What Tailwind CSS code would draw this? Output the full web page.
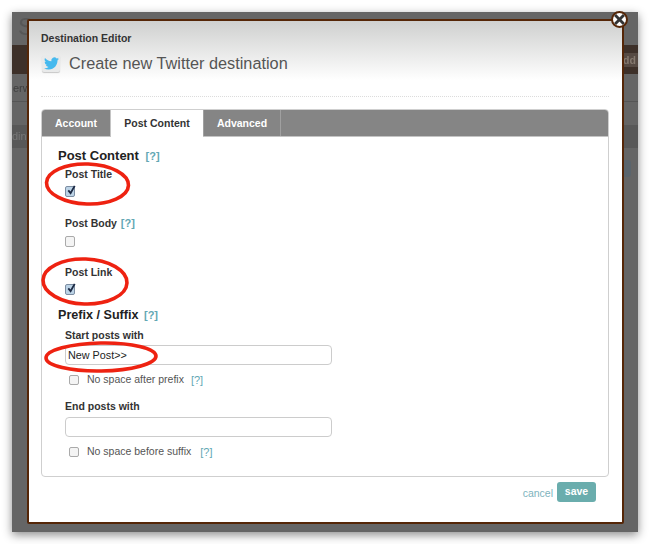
<!DOCTYPE html>
<html>
<head>
<meta charset="utf-8">
<script src="https://cdn.jsdelivr.net/npm/@tailwindcss/browser@4"></script>
</head>
<body class="bg-white font-['Liberation_Sans',Arial,sans-serif] overflow-hidden">
<div class="w-[650px] h-[544px] pt-3 pl-3 blur-[0.5px]">
  <div class="relative w-[626px] h-[520px] bg-[#656565] shadow-[0_3px_9px_rgba(0,0,0,0.45)]">
    <!-- dimmed page behind the modal -->
    <div class="h-[33px] pl-[6px] text-[24px] leading-[30px] text-[#575757]">Sp</div>
    <div class="h-[29px] mb-px bg-[#3d3029] flex justify-end items-center">
      <span class="h-[14px] w-[15px] bg-[#564a43] text-[10.5px] leading-[14px] font-bold text-[#85796f]">dd</span>
    </div>
    <div class="h-[27px] border-b border-[#555] text-[11px] leading-[26px] text-[#3f3f3f] pl-[1px]">erw</div>
    <div class="h-[23px]"></div>
    <div class="h-[23px] bg-[#585858] text-[11px] text-[#777] leading-[22px]">ding</div>
    <div class="h-[12px]"></div>
    <div class="h-[17px] w-[8px] ml-[611px] bg-[#5a646c] rounded-r-[3px]"></div>

    <!-- modal -->
    <div class="absolute left-[15px] top-[7px] w-[597px] h-[505px] bg-white border-2 border-[#552607] rounded-[2px] flex flex-col">
      <div class="h-[76px] pl-[12px] pr-[13px] bg-linear-to-b from-[#cfd0cf] to-white to-[78%] flex flex-col">
        <div class="pt-[10px] text-[10.5px] leading-[14px] font-bold text-[#333]">Destination Editor</div>
        <div class="mt-[8px] flex items-center gap-[9px] h-[20px]">
          <span class="w-[18px] h-[17px] ml-[1px] rounded-[2px] bg-[#e9eaea] flex items-center justify-center shadow-[0_1px_1px_rgba(0,0,0,0.2)]">
            <svg viewBox="0 0 24 24" class="w-[15px] h-[15px]" fill="#45b9ee"><path d="M23.953 4.57a10 10 0 01-2.825.775 4.958 4.958 0 002.163-2.723c-.951.555-2.005.959-3.127 1.184a4.92 4.92 0 00-8.384 4.482C7.69 8.095 4.067 6.13 1.64 3.162a4.822 4.822 0 00-.666 2.475c0 1.71.87 3.213 2.188 4.096a4.904 4.904 0 01-2.228-.616v.06a4.923 4.923 0 003.946 4.827 4.996 4.996 0 01-2.212.085 4.936 4.936 0 004.604 3.417 9.867 9.867 0 01-6.102 2.105c-.39 0-.779-.023-1.17-.067a13.995 13.995 0 007.557 2.209c9.053 0 13.998-7.496 13.998-13.985 0-.21 0-.42-.015-.63A9.935 9.935 0 0024 4.59z"/></svg>
          </span>
          <span class="text-[16.3px] leading-[20px] text-[#555]">Create new Twitter destination</span>
        </div>
        <div class="mt-auto border-b border-dotted border-[#dcdcdc]"></div>
      </div>

      <div class="mt-[12px] ml-[12px] mr-[13px] h-[368px] border border-[#cfcfcf] rounded-[4px] flex flex-col overflow-hidden">
        <div class="h-[27px] flex bg-[#858585] border-b border-[#c4c4c4] text-[10.5px] font-bold leading-[27px] text-center">
          <div class="w-[69px] text-white border-r border-[#c4c4c4]">Account</div>
          <div class="w-[92px] -mb-px bg-white text-[#333] h-[27px]">Post Content</div>
          <div class="w-[78px] text-white border-x border-[#a0a0a0]">Advanced</div>
        </div>
        <div class="pl-[16px] flex flex-col text-[10.5px] text-[#333]">
          <div class="mt-[11px] h-[16px] leading-[16px] text-[13px] font-bold text-[#222]">Post Content <a class="ml-[3px] text-[11px] text-[#62a7b4] font-bold">[?]</a></div>
          <div class="ml-[7px] mt-[3px] h-[14px] leading-[14px] font-bold">Post Title</div>
          <span class="ml-[7px] mt-[5px] w-[10px] h-[11px] rounded-[2px] border border-[#7d8ea3] bg-[#bcd3e6] relative block">
            <svg viewBox="0 0 12 12" class="absolute -top-[3px] left-0 w-[11px] h-[12px]" fill="none" stroke="#1c2a44" stroke-width="2"><path d="M2.5 6.5l2.5 3 4.5-8"/></svg>
          </span>
          <div class="ml-[7px] mt-[19px] h-[14px] leading-[14px] font-bold">Post Body <a class="ml-[1px] text-[11px] text-[#62a7b4]">[?]</a></div>
          <span class="ml-[7px] mt-[6px] w-[10px] h-[11px] rounded-[2px] border border-[#aaa] bg-[#f4f4f4] block"></span>
          <div class="ml-[7px] mt-[18px] h-[14px] leading-[14px] font-bold">Post Link</div>
          <span class="ml-[7px] mt-[5px] w-[10px] h-[11px] rounded-[2px] border border-[#7d8ea3] bg-[#bcd3e6] relative block">
            <svg viewBox="0 0 12 12" class="absolute -top-[3px] left-0 w-[11px] h-[12px]" fill="none" stroke="#1c2a44" stroke-width="2"><path d="M2.5 6.5l2.5 3 4.5-8"/></svg>
          </span>
          <div class="mt-[12px] h-[16px] leading-[16px] text-[12.6px] font-bold text-[#222]">Prefix / Suffix <a class="ml-[2px] text-[11px] text-[#62a7b4] font-bold">[?]</a></div>
          <div class="ml-[7px] mt-[5px] h-[14px] leading-[14px] font-bold">Start posts with</div>
          <div class="ml-[7px] mt-[3px] w-[267px] h-[20px] border border-[#ccc] rounded-[4px] bg-white pl-[2px] leading-[18px] text-[10.8px] text-[#222]">New Post&gt;&gt;</div>
          <div class="ml-[11px] mt-[9px] h-[12px] flex items-center text-[#555]">
            <span class="w-[10px] h-[10px] rounded-[2px] border border-[#aaa] bg-[#f4f4f4] block"></span>
            <span class="ml-[8px]">No space after prefix</span>
            <a class="ml-[7px] text-[11px] text-[#62a7b4]">[?]</a>
          </div>
          <div class="ml-[7px] mt-[13px] h-[14px] leading-[14px] font-bold">End posts with</div>
          <div class="ml-[7px] mt-[4px] w-[267px] h-[20px] border border-[#ccc] rounded-[4px] bg-white"></div>
          <div class="ml-[11px] mt-[9px] h-[12px] flex items-center text-[#555]">
            <span class="w-[10px] h-[10px] rounded-[2px] border border-[#aaa] bg-[#f4f4f4] block"></span>
            <span class="ml-[8px]">No space before suffix</span>
            <a class="ml-[9px] text-[11px] text-[#62a7b4]">[?]</a>
          </div>
        </div>
      </div>

      <div class="mt-[5px] mr-[26px] flex justify-end items-center gap-[4px]">
        <a class="pt-[3px] text-[10.5px] text-[#7db3bd]">cancel</a>
        <button class="w-[39px] h-[20px] rounded-[3px] bg-[#6aadad] text-white text-[10.5px] font-bold">save</button>
      </div>

      <!-- hand-drawn annotations -->
      <svg class="absolute -left-[29px] -top-[21px] w-[650px] h-[544px] pointer-events-none" viewBox="0 0 650 544" fill="none" stroke="#ee2211" stroke-width="3.6">
        <ellipse cx="87.5" cy="184" rx="41" ry="20" transform="rotate(2 87.5 184)"/>
        <ellipse cx="85" cy="281.5" rx="42" ry="22.5" transform="rotate(2 85 281.5)"/>
        <ellipse cx="101" cy="357" rx="55" ry="14" transform="rotate(-1 101 357)"/>
      </svg>

      <!-- close -->
      <span class="absolute -right-[6px] -top-[10px] w-[17px] h-[17px] rounded-full bg-white border-2 border-[#552607] flex items-center justify-center">
        <svg viewBox="0 0 10 10" class="w-[11px] h-[11px]" stroke="#333" stroke-width="2.6"><path d="M1 1l8 8M9 1l-8 8"/></svg>
      </span>
    </div>
  </div>
</div>
</body>
</html>
